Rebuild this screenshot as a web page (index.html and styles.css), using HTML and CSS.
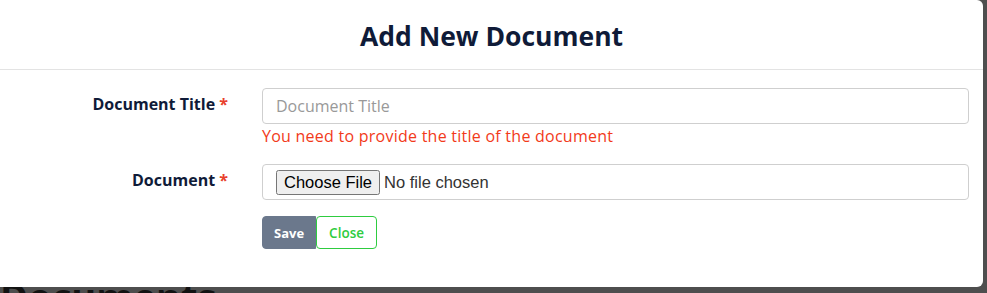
FILE: index.html
```html
<!DOCTYPE html>
<html>
<head>
<title>Add New Document</title>
<link rel="stylesheet" href="styles.css">
</head>
<body>

<div class="modal">
  <div class="modal-header">
    <h3>Add New Document</h3>
  </div>
  <div class="modal-body">
    <div class="form-row">
      <label for="doc-title">Document Title <span class="req">*</span></label>
      <div class="field">
        <input type="text" id="doc-title" class="text-input" placeholder="Document Title">
        <div class="error">You need to provide the title of the document</div>
      </div>
    </div>
    <div class="form-row">
      <label for="doc-file">Document <span class="req">*</span></label>
      <div class="field">
        <div class="file-box">
          <input type="file" id="doc-file">
        </div>
      </div>
    </div>
    <div class="form-row">
      <div></div>
      <div class="actions">
        <button class="btn btn-save">Save</button>
        <button class="btn btn-close">Close</button>
      </div>
    </div>
  </div>
</div>

<h1 class="page-title">Documents</h1>

</body>
</html>
```

FILE: styles.css
```css
body, html {
  margin: 0;
  height: 100%;
  overflow: hidden;
}

body {
  background-color: #4e4e4e;
  font-family: "Open Sans", sans-serif;
}

/* modal sits over the page heading */
.modal {
  position: relative;
  z-index: 2;
  width: 983px;
  height: 287px;
  background-color: #fff;
  border-radius: 0 6px 6px 0;
  box-sizing: border-box;
}

.modal-header {
  height: 70px;
  border-bottom: 1px solid #e3e3e3;
  box-sizing: border-box;
  display: flex;
  align-items: center;
  justify-content: center;
}

.modal-header h3 {
  margin: 0;
  padding-top: 2px;
  font-size: 26.5px;
  font-weight: 700;
  color: #0f1b38;
}

.modal-body {
  padding: 18px 14px 0 0;
}

.form-row {
  display: grid;
  grid-template-columns: 228px 1fr;
  column-gap: 34px;
  margin-bottom: 17px;
}

.form-row label {
  text-align: right;
  font-size: 16px;
  font-weight: 700;
  color: #0f1b38;
  padding-top: 5px;
}

.req {
  color: #e8412c;
}

.text-input {
  width: 100%;
  height: 36px;
  box-sizing: border-box;
  border: 1px solid #cfcfcf;
  border-radius: 4px;
  padding: 0 13px;
  font-family: "Open Sans", sans-serif;
  font-size: 16px;
  color: #333;
}

.text-input::placeholder {
  color: #999;
}

.error {
  margin-top: 1px;
  font-size: 16px;
  letter-spacing: 0.25px;
  color: #f23a1a;
}

.file-box {
  height: 36px;
  box-sizing: border-box;
  border: 1px solid #cfcfcf;
  border-radius: 4px;
  padding: 0 13px;
  display: flex;
  align-items: center;
}

.file-box input {
  font-family: "Liberation Sans", Arial, sans-serif;
  font-size: 16.5px;
  color: #333;
}

.actions {
  display: flex;
  margin-top: -1px;
}

.btn {
  height: 33px;
  font-family: "Open Sans", sans-serif;
  font-size: 13px;
  font-weight: 700;
  border-radius: 4px;
  cursor: pointer;
}

.btn-save {
  padding: 0 11px;
  background-color: #6b788c;
  border: 1px solid #6b788c;
  color: #fff;
  border-radius: 4px 0 0 4px;
}

.btn-close {
  padding: 0 12px;
  background-color: #fff;
  border: 1px solid #2ecc40;
  color: #2ecc40;
  font-size: 13.5px;
  font-weight: 600;
}

.page-title {
  margin: -13px 0 0 0;
  line-height: 1.2;
  font-size: 38px;
  font-weight: 700;
  color: #121212;
}
```
